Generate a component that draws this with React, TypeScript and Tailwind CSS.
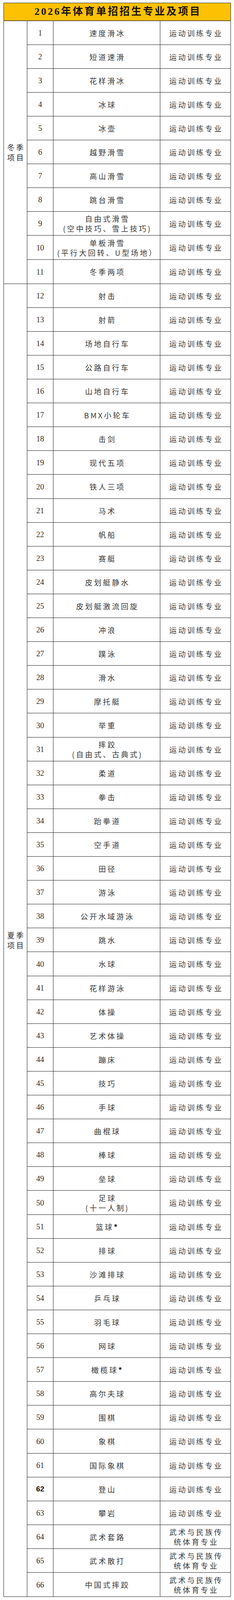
import React from "react";

type Item = { n: number; name: string[]; major?: string[]; bold?: boolean };

const TRAIN = ["运动训练专业"];
const WUSHU = ["武术与民族传", "统体育专业"];

const winter: Item[] = [
  { n: 1, name: ["速度滑冰"] },
  { n: 2, name: ["短道速滑"] },
  { n: 3, name: ["花样滑冰"] },
  { n: 4, name: ["冰球"] },
  { n: 5, name: ["冰壶"] },
  { n: 6, name: ["越野滑雪"] },
  { n: 7, name: ["高山滑雪"] },
  { n: 8, name: ["跳台滑雪"] },
  { n: 9, name: ["自由式滑雪", "(空中技巧、雪上技巧)"] },
  { n: 10, name: ["单板滑雪", "(平行大回转、U型场地）"] },
  { n: 11, name: ["冬季两项"] },
];

const summerNames: (string | string[])[] = [
  "射击",
  "射箭",
  "场地自行车",
  "公路自行车",
  "山地自行车",
  "BMX小轮车",
  "击剑",
  "现代五项",
  "铁人三项",
  "马术",
  "帆船",
  "赛艇",
  "皮划艇静水",
  "皮划艇激流回旋",
  "冲浪",
  "蹼泳",
  "滑水",
  "摩托艇",
  "举重",
  ["摔跤", "(自由式、古典式)"],
  "柔道",
  "拳击",
  "跆拳道",
  "空手道",
  "田径",
  "游泳",
  "公开水域游泳",
  "跳水",
  "水球",
  "花样游泳",
  "体操",
  "艺术体操",
  "蹦床",
  "技巧",
  "手球",
  "曲棍球",
  "棒球",
  "垒球",
  ["足球", "(十一人制)"],
  "篮球*",
  "排球",
  "沙滩排球",
  "乒乓球",
  "羽毛球",
  "网球",
  "橄榄球*",
  "高尔夫球",
  "围棋",
  "象棋",
  "国际象棋",
  "登山",
  "攀岩",
  "武术套路",
  "武术散打",
  "中国式摔跤",
];

const summer: Item[] = summerNames.map((s, i) => {
  const n = 12 + i;
  return {
    n,
    name: Array.isArray(s) ? s : [s],
    major: n >= 64 ? WUSHU : TRAIN,
    bold: n === 62,
  };
});

const cjk = { fontFamily: '"Noto Sans CJK SC", "Noto Sans", sans-serif' };
const num = { fontFamily: '"Liberation Serif", "Noto Sans CJK SC", serif' };

function Line({ text }: { text: string }) {
  if (text.endsWith("*")) {
    return (
      <span className="whitespace-nowrap">
        {text.slice(0, -1)}
        <span className="font-bold text-[#111]">*</span>
      </span>
    );
  }
  return <span className="whitespace-nowrap">{text}</span>;
}

function Row({ item, last }: { item: Item; last: boolean }) {
  const major = item.major ?? TRAIN;
  const tall = item.n % 10 === 0;
  return (
    <div
      className={
        "flex overflow-hidden " +
        (tall ? "h-[62px] " : "h-[61px] ") +
        (last ? "" : "border-b border-[#1e1e1e]")
      }
    >
      <div
        className={
          "w-[67px] shrink-0 border-r border-[#1e1e1e] flex items-center justify-center leading-[24px] " +
          (item.bold ? "text-[19px] text-[#111] font-bold" : "text-[20px] text-[#2e2e2e]")
        }
        style={item.bold ? { fontFamily: '"Liberation Sans", sans-serif' } : num}
      >
        {item.n}
      </div>
      <div
        className="w-[274px] shrink-0 border-r border-[#1e1e1e] flex flex-col items-center justify-center text-[19px] leading-[25px] tracking-[4px] pl-[4px] text-[#3a3a3a]"
        style={cjk}
      >
        {item.name.map((t, i) => (
          <Line key={i} text={t} />
        ))}
      </div>
      <div
        className="flex-1 flex flex-col items-center justify-center text-[19px] leading-[25px] tracking-[4px] pl-[4px] text-[#3a3a3a]"
        style={cjk}
      >
        {major.map((t, i) => (
          <span key={i} className="whitespace-nowrap">
            {t}
          </span>
        ))}
      </div>
    </div>
  );
}

function Section({
  label,
  items,
  lastSection,
}: {
  label: string[];
  items: Item[];
  lastSection: boolean;
}) {
  return (
    <div className={"flex " + (lastSection ? "" : "border-b border-[#1e1e1e]")}>
      <div
        className="w-[60px] shrink-0 border-r border-[#1e1e1e] flex flex-col items-center justify-center text-[19px] leading-[26px] tracking-[4px] pl-[4px] text-[#2e2e2e]"
        style={cjk}
      >
        {label.map((t, i) => (
          <span key={i} className="whitespace-nowrap">
            {t}
          </span>
        ))}
      </div>
      <div className="flex-1 flex flex-col">
        {items.map((it, i) => (
          <Row key={it.n} item={it} last={i === items.length - 1} />
        ))}
      </div>
    </div>
  );
}

export default function App() {
  return (
    <div className="w-[600px] bg-white pt-[7px] pl-[9px] pb-[8px]">
      <div className="w-[583px] border border-[#1e1e1e]">
        <div className="h-[46px] bg-[#fbc102] border-b-2 border-[#6b5a2a] flex items-center justify-center">
          <span
            className="text-[26px] leading-[32px] font-bold tracking-[4px] text-[#1a1200] pl-[4px] whitespace-nowrap"
            style={{ fontFamily: '"Liberation Serif", "Noto Sans CJK SC", serif' }}
          >
            2026年体育单招招生专业及项目
          </span>
        </div>
        <Section label={["冬季", "项目"]} items={winter} lastSection={false} />
        <Section label={["夏季", "项目"]} items={summer} lastSection={true} />
      </div>
    </div>
  );
}
